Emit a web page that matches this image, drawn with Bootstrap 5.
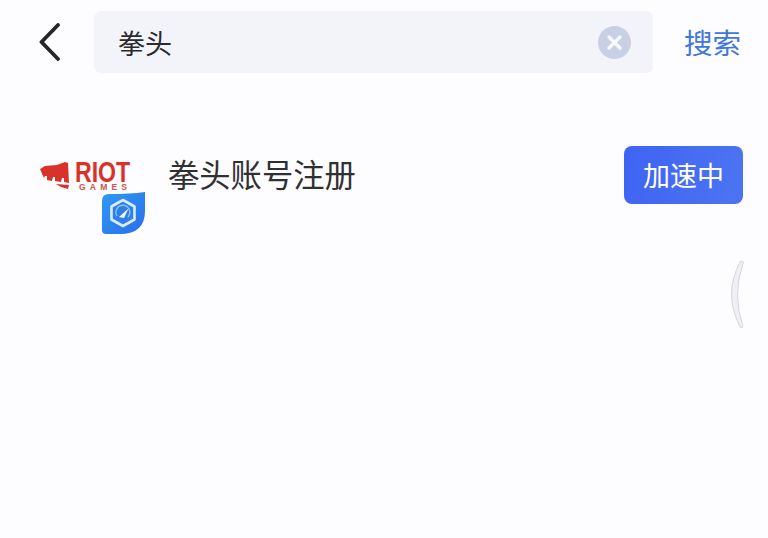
<!DOCTYPE html>
<html lang="zh-CN">
<head>
<meta charset="utf-8">
<title>搜索</title>
<link href="https://cdn.jsdelivr.net/npm/bootstrap@5.3.0/dist/css/bootstrap.min.css" rel="stylesheet">
<style>
html,body{height:100%;overflow:hidden}
body{background:#fdfcfe;font-family:"Noto Sans CJK SC","Liberation Sans",sans-serif;color:#2b2b2e;position:relative}
.topbar{padding:11px 26px 0 39px;height:73px}
.back-ic{width:55px;flex:none}
.search-box{width:559px;height:62px;background:#f3f4fa;border-radius:7px;padding:0 22px 0 24px;font-size:27px;line-height:1}
.clear-ic{width:33px;height:33px;flex:none}
.search-go{font-size:28.500px;color:#3f78dc;margin-left:31px;line-height:1;white-space:nowrap}
.app-row{padding:72px 25px 0 40px}
.logo-wrap{width:105px;height:89px;flex:none;position:relative}
.logo-wrap svg{display:block}
.app-title{font-size:31.300px;line-height:1;margin-left:23px;margin-top:-32px;color:#303034}
.speed-btn{width:119px;height:58px;background:linear-gradient(100deg,#3f64f3,#4c74f1);color:#fff;border:0;border-radius:8px;font-size:27px;line-height:1;padding:0;margin-top:-30px}
.edge-arc{position:absolute;left:728px;top:258px}
</style>
</head>
<body>
<div class="topbar d-flex align-items-center">
  <div class="back-ic">
    <svg width="22" height="38" viewBox="0 0 22 38"><path d="M19 2 L2.500 19 L19 36" fill="none" stroke="#26262a" stroke-width="3.800" stroke-linecap="round" stroke-linejoin="round"/></svg>
  </div>
  <div class="search-box d-flex align-items-center justify-content-between">
    <span>拳头</span>
    <svg class="clear-ic" viewBox="0 0 33 33"><circle cx="16.500" cy="16.500" r="16.500" fill="#c8d0e6"/><path d="M11 11 L22 22 M22 11 L11 22" stroke="#f7f8fc" stroke-width="3.400" stroke-linecap="round"/></svg>
  </div>
  <span class="search-go">搜索</span>
</div>
<div class="app-row d-flex align-items-center">
  <div class="logo-wrap">
    <svg width="105" height="89" viewBox="0 0 105 89">
      <path d="M0 24 L5 21 L17 20 L25 17 L28 18 L29 38 L24 37 L24 33 L22 33 L21 37 L15 36 L15 32 L13 32 L12 36 L7 35 L7 31 L5 31 L4 33 Z" fill="#d8322a"/>
      <path d="M16 39 L29 40 L28 44 L21 42 Z" fill="#d8322a"/>
      <text transform="translate(35 37) scale(.77 1)" font-family="'Liberation Sans',sans-serif" font-weight="700" font-size="30" fill="#d8322a">RIOT</text>
      <text x="39" y="45" font-family="'Liberation Sans',sans-serif" font-weight="700" font-size="8.500" letter-spacing="4.200" fill="#c9544c">GAMES</text>
      <defs><linearGradient id="sh" x1="0" y1="0" x2="1" y2="1"><stop offset="0" stop-color="#2f9af5"/><stop offset="1" stop-color="#2a6eea"/></linearGradient></defs>
      <path d="M62 56 Q62 49 69 49 Q90 49 105 47 L105 66 Q105 89 80 89 L66 89 Q62 89 62 85 Z" fill="url(#sh)"/>
      <g transform="translate(83 68)">
        <path d="M0 -13 L11.500 -6.500 L11.500 6.500 L0 13 L-11.500 6.500 L-11.500 -6.500 Z" fill="#2f7fe8" stroke="#d9ebfc" stroke-width="2.600" stroke-linejoin="round"/>
        <path d="M-6 3 A7 7 0 1 1 5 4" fill="none" stroke="#8cc2f6" stroke-width="1.400"/>
        <path d="M-4 4 L5.500 -4.500 L1 5 Z" fill="#f2f8fe"/>
      </g>
    </svg>
  </div>
  <span class="app-title flex-grow-1">拳头账号注册</span>
  <button type="button" class="btn speed-btn">加速中</button>
</div>
<svg class="edge-arc" width="20" height="74" viewBox="0 0 20 74"><path d="M12.500 3 Q3.500 20 3.500 36 Q3.500 52 12.500 70 L15 69 Q9.500 52 9.500 36 Q9.500 20 15.500 4 Z" fill="#f1eff5" stroke="#d6d4dd" stroke-width="1"/></svg>
<script src="https://cdn.jsdelivr.net/npm/bootstrap@5.3.0/dist/js/bootstrap.bundle.min.js"></script>
</body>
</html>
